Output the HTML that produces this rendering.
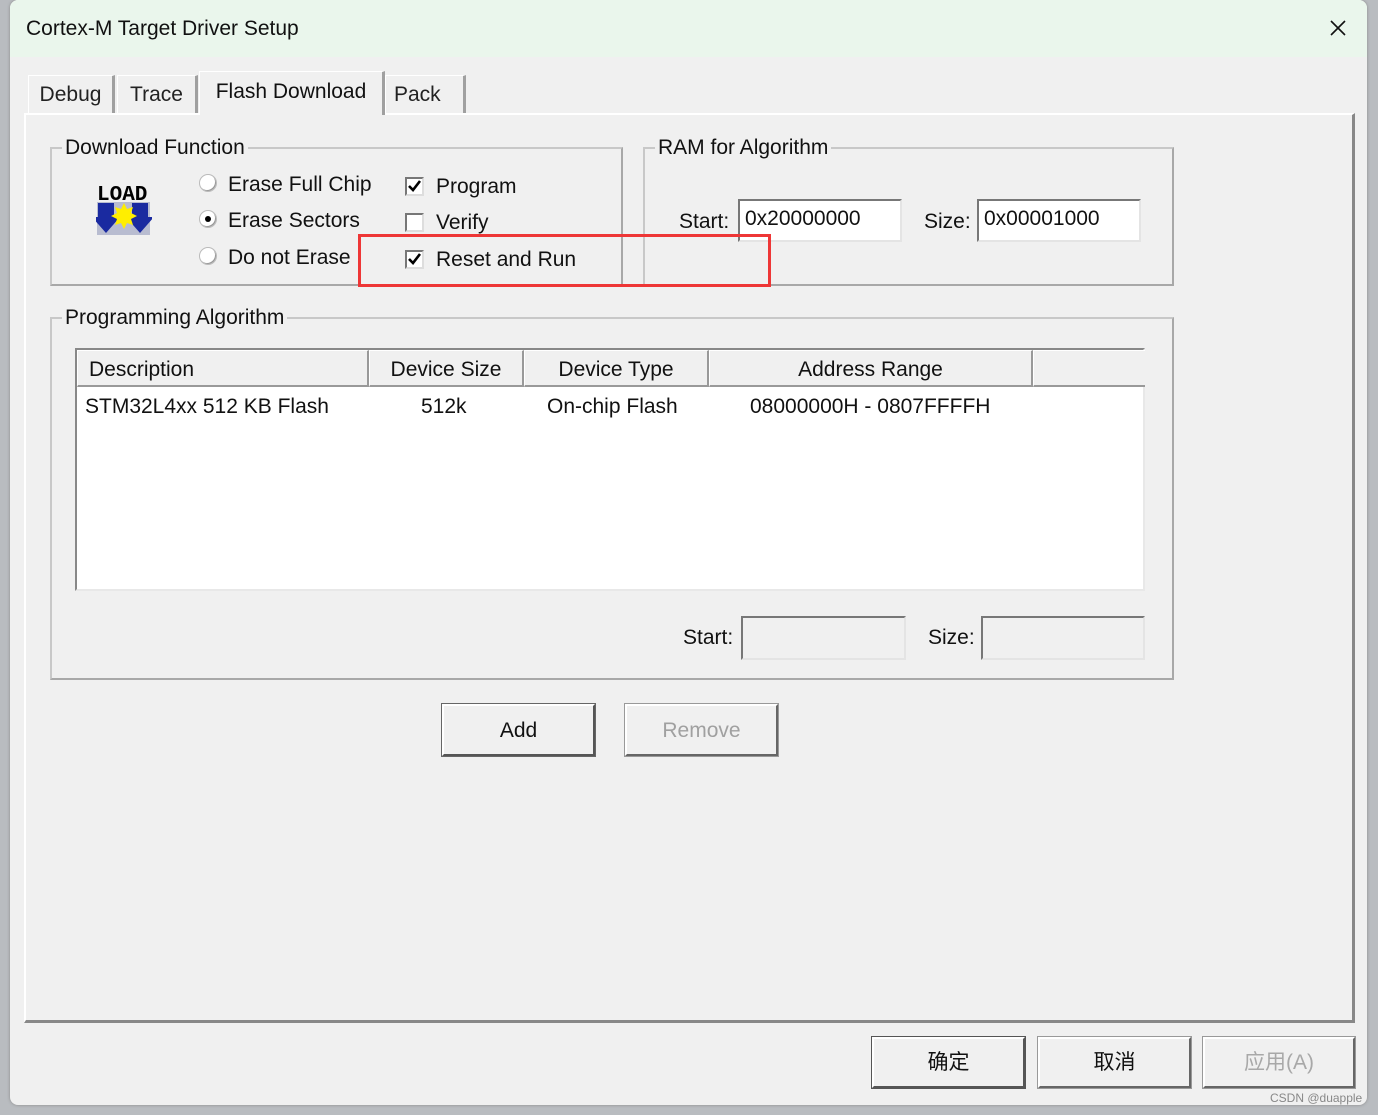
<!DOCTYPE html>
<html><head><meta charset="utf-8"><style>
*{margin:0;padding:0;box-sizing:border-box}
body{width:1378px;height:1115px;background:#b9bcc0;position:relative;overflow:hidden;font-family:"Liberation Sans","Noto Sans CJK SC",sans-serif;font-size:21px;color:#111}
.a{position:absolute;white-space:nowrap}
#win{left:10px;top:0;width:1357px;height:1105px;background:#f0f0f0;border-radius:8px;overflow:hidden;box-shadow:0 0 3px #888}
#title{left:0;top:0;width:1357px;height:57px;background:#eaf6ec}
.tab{border:1px solid #fff;border-right:3px solid #a0a0a0;border-bottom:none;background:#f0f0f0;height:38px;padding-top:7px;text-align:center;color:#222}
.grp{border:2px solid #c8c8c8;border-right-color:#a8a8a8;border-bottom-color:#a8a8a8}
.lbl{background:#f0f0f0;padding:0 3px;line-height:24px}
.inp{background:#fff;border:2px solid #777;border-right-color:#e4e4e4;border-bottom-color:#e4e4e4;padding-left:5px;line-height:36px}
.btn{border:2px solid #fff;border-right-color:#666;border-bottom-color:#666;outline:1px solid #999;background:#f0f0f0;text-align:center}
.rad{width:18px;height:18px;border-radius:50%;background:#fff;border:1px solid #bbb;box-shadow:-1px -1px 0 #999 inset}
.chk{width:19px;height:19px;background:#fff;border:2px solid #777;border-right-color:#ddd;border-bottom-color:#ddd}
.th{top:0;height:37px;border:1px solid #fff;border-right:2px solid #999;border-bottom:2px solid #999;line-height:38px;text-align:center;background:#f0f0f0}
</style></head><body>
<div class="a" id="win">
 <div class="a" id="title"></div>
 <div class="a" style="left:16px;top:17px">Cortex-M Target Driver Setup</div>
 <svg class="a" style="left:1320px;top:20px" width="16" height="16"><path d="M1 1L15 15M15 1L1 15" stroke="#111" stroke-width="1.6"/></svg>
 <div class="a" style="left:14px;top:113px;width:1331px;height:910px;border:2px solid #fff;border-right:3px solid #888;border-bottom:3px solid #888"></div>
 <div class="a tab" style="left:18px;top:75px;width:87px">Debug</div>
 <div class="a tab" style="left:107px;top:75px;width:81px">Trace</div>
 <div class="a tab" style="left:189px;top:71px;width:186px;height:44px;border-bottom:none;padding-top:8px;color:#111">Flash Download</div>
 <div class="a tab" style="left:375px;top:75px;width:81px;text-align:left;padding-left:8px">Pack</div>
 <div class="a grp" style="left:40px;top:147px;width:573px;height:139px"></div>
 <div class="a lbl" style="left:52px;top:136px">Download Function</div>
 <svg class="a" style="left:86px;top:181px" width="56" height="55" viewBox="0 0 56 55">
  <text x="1" y="19" font-family="Liberation Mono" font-weight="bold" font-size="21" fill="#000">LOAD</text>
  <rect x="1" y="21" width="53" height="33" fill="#b8bcd0"/>
  <path d="M2 22h16v14h6l-14 16l-14-16h6z M36 22h16v14h6l-14 16l-14-16h6z" fill="#1a2aa0"/>
  <path d="M28 22l3 6l6-2l-2 6l6 3l-6 3l2 6l-6-2l-3 6l-3-6l-6 2l2-6l-6-3l6-3l-2-6l6 2z" fill="#ffee00"/>
 </svg>
 <div class="a rad" style="left:189px;top:174px"></div>
 <div class="a" style="left:218px;top:173px">Erase Full Chip</div>
 <div class="a rad" style="left:189px;top:210px;display:flex;align-items:center;justify-content:center"><div style="width:6px;height:6px;border-radius:50%;background:#000"></div></div>
 <div class="a" style="left:218px;top:209px">Erase Sectors</div>
 <div class="a rad" style="left:189px;top:247px"></div>
 <div class="a" style="left:218px;top:246px">Do not Erase</div>
 <div class="a chk" style="left:395px;top:177px"><svg width="15" height="15" style="display:block"><path d="M2 7l4 4l7-9" stroke="#000" stroke-width="2.6" fill="none"/></svg></div>
 <div class="a" style="left:426px;top:175px">Program</div>
 <div class="a chk" style="left:395px;top:213px"></div>
 <div class="a" style="left:426px;top:211px">Verify</div>
 <div class="a chk" style="left:395px;top:250px"><svg width="15" height="15" style="display:block"><path d="M2 7l4 4l7-9" stroke="#000" stroke-width="2.6" fill="none"/></svg></div>
 <div class="a" style="left:426px;top:248px">Reset and Run</div>
 <div class="a grp" style="left:633px;top:147px;width:531px;height:139px"></div>
 <div class="a lbl" style="left:645px;top:136px">RAM for Algorithm</div>
 <div class="a" style="left:669px;top:210px">Start:</div>
 <div class="a inp" style="left:728px;top:199px;width:164px;height:43px">0x20000000</div>
 <div class="a" style="left:914px;top:210px">Size:</div>
 <div class="a inp" style="left:967px;top:199px;width:164px;height:43px">0x00001000</div>
 <div class="a" style="left:348px;top:234px;width:413px;height:53px;border:3px solid #ee3636"></div>
 <div class="a grp" style="left:40px;top:317px;width:1124px;height:363px"></div>
 <div class="a lbl" style="left:52px;top:306px">Programming Algorithm</div>
 <div class="a" style="left:65px;top:348px;width:1070px;height:243px;background:#fff;border:2px solid #888;border-right-color:#e8e8e8;border-bottom-color:#e8e8e8">
  <div class="a th" style="left:0;width:292px;text-align:left;padding-left:11px">Description</div>
  <div class="a th" style="left:292px;width:155px">Device Size</div>
  <div class="a th" style="left:447px;width:185px">Device Type</div>
  <div class="a th" style="left:632px;width:324px">Address Range</div>
  <div class="a th" style="left:956px;width:112px;border-right:none"></div>
  <div class="a" style="left:8px;top:45px">STM32L4xx 512 KB Flash</div>
  <div class="a" style="left:344px;top:45px">512k</div>
  <div class="a" style="left:470px;top:45px">On-chip Flash</div>
  <div class="a" style="left:673px;top:45px">08000000H - 0807FFFFH</div>
 </div>
 <div class="a" style="left:673px;top:626px">Start:</div>
 <div class="a inp" style="left:731px;top:616px;width:165px;height:44px;background:#f0f0f0"></div>
 <div class="a" style="left:918px;top:626px">Size:</div>
 <div class="a inp" style="left:971px;top:616px;width:164px;height:44px;background:#f0f0f0"></div>
 <div class="a btn" style="left:432px;top:704px;width:153px;height:52px;line-height:50px;border-color:#fff #555 #555 #fff;outline-color:#666">Add</div>
 <div class="a btn" style="left:615px;top:704px;width:153px;height:52px;line-height:50px;color:#a0a0a0">Remove</div>
 <div class="a btn" style="left:862px;top:1037px;width:153px;height:51px;line-height:48px;border-color:#fff #555 #555 #fff;outline-color:#555">确定</div>
 <div class="a btn" style="left:1028px;top:1037px;width:153px;height:51px;line-height:48px">取消</div>
 <div class="a btn" style="left:1193px;top:1037px;width:152px;height:51px;line-height:48px;color:#a8a8a8">应用(A)</div>
 <div class="a" style="left:1260px;top:1091px;font-size:12px;color:#888">CSDN @duapple</div>
</div>
</body></html>
